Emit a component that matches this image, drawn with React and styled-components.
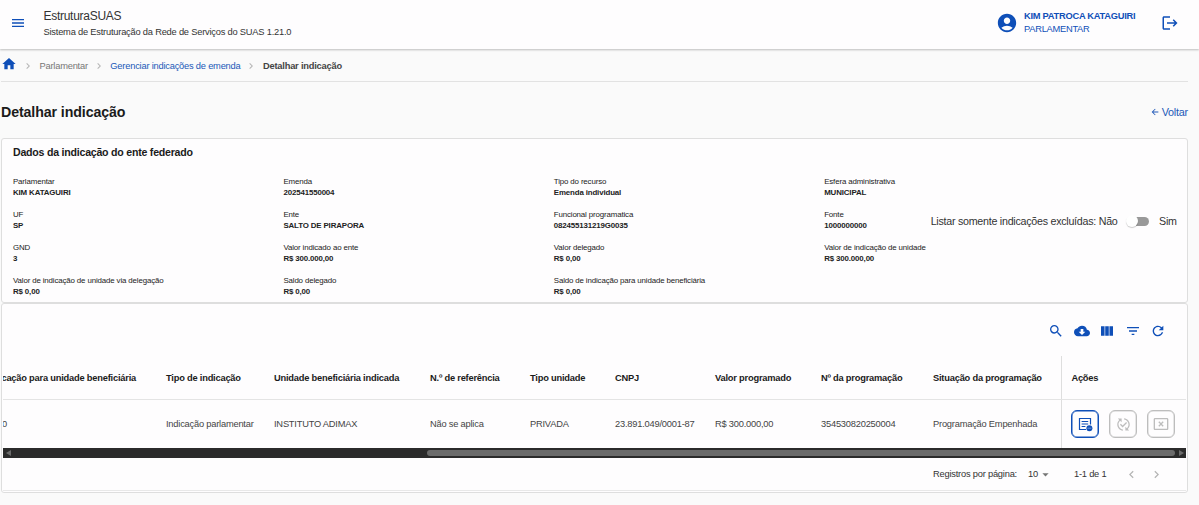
import React, { useState } from 'react';
import styled, { createGlobalStyle } from 'styled-components';
import {
    MdMenu,
    MdHome,
    MdAccountCircle,
    MdLogout,
    MdArrowBack,
    MdSearch,
    MdCloudDownload,
    MdViewColumn,
    MdFilterList,
    MdRefresh,
    MdPublishedWithChanges,
    MdCancelPresentation,
    MdArrowDropDown,
    MdChevronLeft,
    MdChevronRight
} from 'react-icons/md';

// -------------------------------------------------------- Data
const fields = [
    { label: 'Parlamentar', value: 'KIM KATAGUIRI' },
    { label: 'Emenda', value: '202541550004' },
    { label: 'Tipo do recurso', value: 'Emenda individual' },
    { label: 'Esfera administrativa', value: 'MUNICIPAL' },
    { label: 'UF', value: 'SP' },
    { label: 'Ente', value: 'SALTO DE PIRAPORA' },
    { label: 'Funcional programatica', value: '082455131219G0035' },
    { label: 'Fonte', value: '1000000000' },
    { label: 'GND', value: '3' },
    { label: 'Valor indicado ao ente', value: 'R$ 300.000,00' },
    { label: 'Valor delegado', value: 'R$ 0,00' },
    { label: 'Valor de indicação de unidade', value: 'R$ 300.000,00' },
    { label: 'Valor de indicação de unidade via delegação', value: 'R$ 0,00' },
    { label: 'Saldo delegado', value: 'R$ 0,00' },
    { label: 'Saldo de indicação para unidade beneficiária', value: 'R$ 0,00' }
];

const columns = [
    { title: 'Tipo de indicação', value: 'Indicação parlamentar' },
    { title: 'Unidade beneficiária indicada', value: 'INSTITUTO ADIMAX' },
    { title: 'N.º de referência', value: 'Não se aplica' },
    { title: 'Tipo unidade', value: 'PRIVADA' },
    { title: 'CNPJ', value: '23.891.049/0001-87' },
    { title: 'Valor programado', value: 'R$ 300.000,00' },
    { title: 'Nº da programação', value: '354530820250004' },
    { title: 'Situação da programação', value: 'Programação Empenhada' }
];

const DetailIcon = () => (
    <svg width="16" height="16" viewBox="0 0 16 16" fill="none" stroke="currentColor">
        <path d="M9 13.5H2.5V2.5H13.5V8.5" strokeWidth="1.2" />
        <path d="M4.6 5.5H11.2M4.6 8H11.2M4.6 10.5H8.4" strokeWidth="1" />
        <circle cx="12.4" cy="12.2" r="3" fill="currentColor" stroke="none" />
        <path d="M10.4 12.2H14.4" stroke="#7c9fda" strokeWidth="0.9" />
    </svg>
);

const App = () => {
    const [onlyDeleted, setOnlyDeleted] = useState(false);

    return (
        <>
            <GlobalStyle />
            <Header>
                <MenuButton><MdMenu size={16} /></MenuButton>
                <Brand>
                    <BrandName>EstruturaSUAS</BrandName>
                    <BrandText>Sistema de Estruturação da Rede de Serviços do SUAS 1.21.0</BrandText>
                </Brand>
                <MdAccountCircle size={22} />
                <User>
                    <UserName>KIM PATROCA KATAGUIRI</UserName>
                    <UserRole>PARLAMENTAR</UserRole>
                </User>
                <MdLogout size={18} />
            </Header>

            <Page>
                <Breadcrumb>
                    <HomeLink><MdHome size={16} /></HomeLink>
                    <Separator><MdChevronRight size={12} /></Separator>
                    <Crumb>Parlamentar</Crumb>
                    <Separator><MdChevronRight size={12} /></Separator>
                    <CrumbLink>Gerenciar indicações de emenda</CrumbLink>
                    <Separator><MdChevronRight size={12} /></Separator>
                    <CurrentCrumb>Detalhar indicação</CurrentCrumb>
                </Breadcrumb>

                <TitleRow>
                    <Title>Detalhar indicação</Title>
                    <BackLink><MdArrowBack size={10} />Voltar</BackLink>
                </TitleRow>

                <DataCard>
                    <CardTitle>Dados da indicação do ente federado</CardTitle>
                    <CardBody>
                        <FieldGrid>
                            {fields.map(field => (
                                <Field key={field.label}>
                                    <FieldLabel>{field.label}</FieldLabel>
                                    <FieldValue>{field.value}</FieldValue>
                                </Field>
                            ))}
                        </FieldGrid>
                        <Filter>
                            <span>Listar somente indicações excluídas: Não</span>
                            <Switch $on={onlyDeleted} onClick={() => setOnlyDeleted(!onlyDeleted)}>
                                <SwitchKnob />
                            </Switch>
                            <span>Sim</span>
                        </Filter>
                    </CardBody>
                </DataCard>

                <TableCard>
                    <Toolbar>
                        <MdSearch />
                        <MdCloudDownload />
                        <MdViewColumn />
                        <MdFilterList />
                        <MdRefresh />
                    </Toolbar>
                    <TableRow $head>
                        <ScrolledCell>Saldo de indicação para unidade beneficiária</ScrolledCell>
                        {columns.map(col => <Cell key={col.title}>{col.title}</Cell>)}
                        <ActionCell>Ações</ActionCell>
                    </TableRow>
                    <TableRow>
                        <ScrolledCell $amount>R$ 300.000,00</ScrolledCell>
                        {columns.map(col => <Cell key={col.title}>{col.value}</Cell>)}
                        <ActionCell>
                            <ActionButton $active><DetailIcon /></ActionButton>
                            <ActionButton><MdPublishedWithChanges size={15} /></ActionButton>
                            <ActionButton><MdCancelPresentation size={16} /></ActionButton>
                        </ActionCell>
                    </TableRow>
                    <Scrollbar>
                        <ScrollArrow />
                        <ScrollThumb />
                        <ScrollArrow $right />
                    </Scrollbar>
                    <Pagination>
                        <span>Registros por página:</span>
                        <PageSize>10<MdArrowDropDown size={15} /></PageSize>
                        <PageRange>1-1 de 1</PageRange>
                        <PageButton><MdChevronLeft size={15} /></PageButton>
                        <PageButton><MdChevronRight size={15} /></PageButton>
                    </Pagination>
                </TableCard>
            </Page>
        </>
    );
};

const GlobalStyle = createGlobalStyle`
    * {
        box-sizing: border-box;
    }

    body {
        margin: 0;
        background: #fafafa;
        color: #333;
        font-family: "Liberation Sans", Arial, sans-serif;
        font-size: 9.3px;
        letter-spacing: -0.21px;
        overflow: hidden;
        white-space: nowrap;
    }

    button {
        padding: 0;
        border: none;
        background: none;
        color: inherit;
        font: inherit;
    }

    svg {
        display: block;
        flex-shrink: 0;
    }
`;

const Header = styled.header`
    display: flex;
    align-items: center;
    height: 49px;
    padding: 0 20px 3px 10px;
    background: #fefdfe;
    color: #0f4fb8;
    box-shadow: 0 1px 2px rgba(0, 0, 0, 0.25);
`;

const MenuButton = styled.button`
    margin-right: 17.5px;
`;

const Brand = styled.div`
    flex: 1;
    padding-top: 1px;
    color: #333;
`;

const BrandName = styled.div`
    font-size: 12px;
    letter-spacing: -0.28px;
    line-height: 16px;
`;

const BrandText = styled.div`
    line-height: 16px;
`;

const User = styled.div`
    width: 137px;
    margin-left: 6.5px;
    line-height: 13px;
`;

const UserName = styled.div`
    font-weight: bold;
    letter-spacing: -0.26px;
`;

const UserRole = styled.div`
    letter-spacing: -0.26px;
`;

const Page = styled.main`
    width: 1188px;
    padding-left: 1px;
`;

const Breadcrumb = styled.nav`
    display: flex;
    align-items: center;
    height: 33px;
    padding-top: 1px;
    border-bottom: 1px solid #e2e2e2;
    color: #777;
`;

const HomeLink = styled.a`
    margin-top: -4px;
    color: #0f4fb8;
`;

const Separator = styled.span`
    width: 12px;
    margin: 0 5.5px 0 5px;
    color: #b5b5b5;
`;

const Crumb = styled.span``;

const CrumbLink = styled.a`
    color: #2159b8;
`;

const CurrentCrumb = styled.span`
    color: #444;
    font-weight: bold;
`;

const TitleRow = styled.div`
    display: flex;
    align-items: center;
    justify-content: space-between;
    height: 56px;
    padding-top: 5px;
`;

const Title = styled.h1`
    margin: -1px 0 0;
    color: #1b1b1b;
    font-size: 14.2px;
    letter-spacing: -0.1px;
`;

const BackLink = styled.a`
    display: flex;
    align-items: center;
    gap: 2px;
    margin-top: -2px;
    color: #2159b8;
    font-size: 10.8px;
`;

const Card = styled.section`
    border: 1px solid #dedede;
    border-radius: 3px;
    background: #fefdfe;
`;

const DataCard = styled(Card)`
    height: 165px;
    padding: 7px 10px 0 11px;
`;

const CardTitle = styled.h2`
    margin: 0 0 18px;
    color: #1b1b1b;
    font-size: 10.6px;
    letter-spacing: -0.23px;
    line-height: 12px;
`;

const CardBody = styled.div`
    display: flex;
`;

const FieldGrid = styled.div`
    display: grid;
    grid-template-columns: repeat(3, 270.4px) 106.5px;
    grid-auto-rows: 33px;
`;

const Field = styled.div`
    color: #222;
    font-size: 7.9px;
    letter-spacing: -0.14px;
    line-height: 11px;
`;

const FieldLabel = styled.div``;

const FieldValue = styled.div`
    font-weight: bold;
`;

const Filter = styled.div`
    display: flex;
    align-items: center;
    height: 24px;
    margin-top: 33px;
    color: #333;
    font-size: 10.7px;
    letter-spacing: -0.26px;
`;

const Switch = styled.button`
    display: flex;
    align-items: center;
    justify-content: ${props => props.$on ? 'flex-end' : 'flex-start'};
    width: 21px;
    height: 9px;
    margin: 0 10px 0 10.5px;
    border-radius: 5px;
    background: ${props => props.$on ? '#2159b8' : '#999'};
`;

const SwitchKnob = styled.span`
    flex-shrink: 0;
    width: 12px;
    height: 12px;
    margin: 0 -2px;
    border-radius: 50%;
    background: #fff;
    box-shadow: 0 1px 1px rgba(0, 0, 0, 0.2);
`;

const TableCard = styled(Card)`
    height: 190px;
    padding: 0 1px;
`;

const Toolbar = styled.div`
    display: flex;
    align-items: center;
    justify-content: flex-end;
    gap: 9.5px;
    height: 52px;
    padding: 2px 20px 0 0;
    color: #0f4fb8;
    font-size: 16px;
`;

const TableRow = styled.div`
    display: grid;
    grid-template-columns: 163px 108px 156px 100px 85px 100px 106px 112px 128px 125px;
    align-items: stretch;
    height: ${props => props.$head ? 44 : 48}px;
    border-bottom: ${props => props.$head ? '1px solid #e4e4e4' : 'none'};
    color: ${props => props.$head ? '#1b1b1b' : '#444'};
    font-weight: ${props => props.$head ? 'bold' : 'normal'};
    overflow: hidden;
`;

const Cell = styled.div`
    display: flex;
    align-items: center;
`;

const ScrolledCell = styled(Cell)`
    justify-content: flex-end;
    padding-right: ${props => props.$amount ? 159 : 30}px;
    overflow: hidden;
`;

const ActionCell = styled(Cell)`
    gap: 10px;
    padding-left: 9.4px;
    border-left: 1px solid #dedede;
`;

const ActionButton = styled.button`
    display: flex;
    align-items: center;
    justify-content: center;
    width: 28px;
    height: 28px;
    border: 1px solid ${props => props.$active ? '#0f4fb8' : '#bdbdbd'};
    border-radius: 6px;
    box-shadow: inset 0 0 0 0.5px ${props => props.$active ? '#0f4fb8' : '#cfcfcf'};
    color: ${props => props.$active ? '#0f4fb8' : '#bdbdbd'};
`;

const Scrollbar = styled.div`
    display: flex;
    align-items: center;
    justify-content: space-between;
    height: 10px;
    padding: 0 2px 0 3px;
    background: #2b2b2b;
`;

const ScrollArrow = styled.span`
    border: 3px solid transparent;
    border-width: 3px ${props => props.$right ? 0 : 5}px 3px ${props => props.$right ? 5 : 0}px;
    border-left-color: ${props => props.$right ? '#6b6b6b' : 'transparent'};
    border-right-color: ${props => props.$right ? 'transparent' : '#6b6b6b'};
`;

const ScrollThumb = styled.span`
    width: 748px;
    height: 6px;
    margin: 0 4px 0 auto;
    border-radius: 3px;
    background: #6b6b6b;
`;

const Pagination = styled.div`
    display: flex;
    align-items: center;
    height: 33px;
    padding-left: 930px;
    border-bottom: 1px solid #e8e8e8;
`;

const PageSize = styled.div`
    display: flex;
    align-items: center;
    width: 46px;
    margin-left: 11px;

    svg {
        color: #757575;
    }
`;

const PageRange = styled.span`
    width: 50px;
`;

const PageButton = styled.button`
    width: 25.5px;
    color: #b5b5b5;
`;

export default App;
